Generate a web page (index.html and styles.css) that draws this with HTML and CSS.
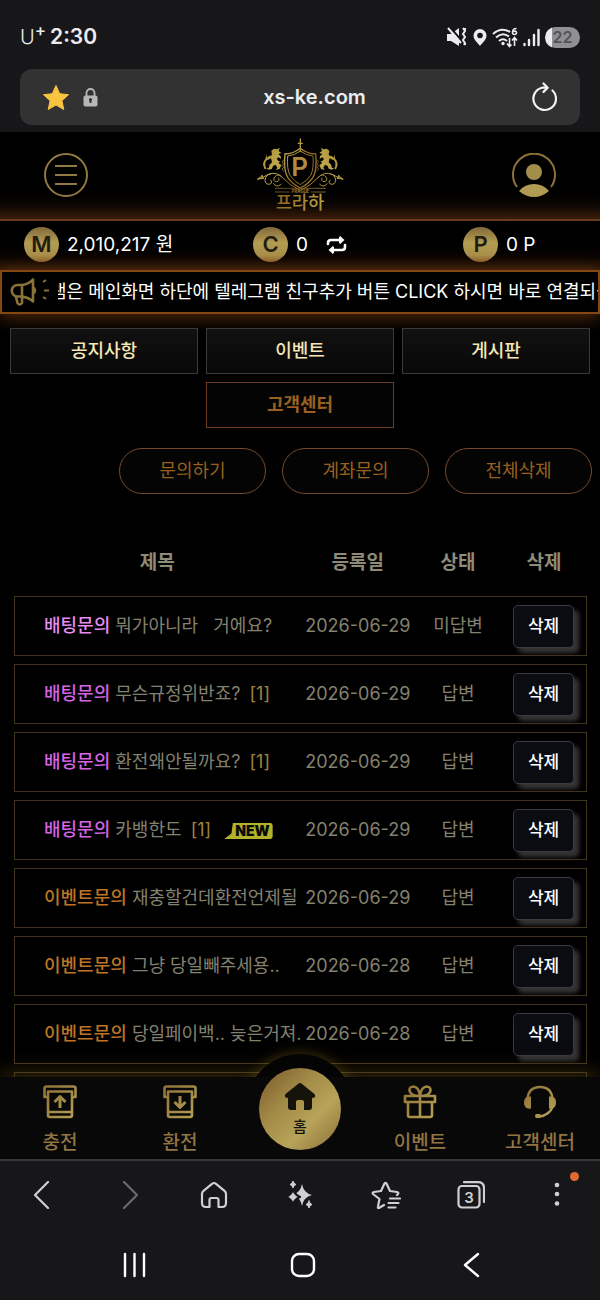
FILE: index.html
```html
<!DOCTYPE html>
<html lang="ko">
<head>
<meta charset="utf-8">
<meta name="viewport" content="width=device-width, initial-scale=1">
<title>프라하 고객센터</title>
<link rel="stylesheet" href="styles.css">
</head>
<body>
<svg class="defs" width="0" height="0" aria-hidden="true">
  <defs>
    <linearGradient id="gold" gradientUnits="userSpaceOnUse" x1="0" y1="0" x2="32" y2="32"><stop offset="0" stop-color="#8f6f36"/><stop offset=".5" stop-color="#a18846"/><stop offset="1" stop-color="#b5a056"/></linearGradient>
    <linearGradient id="crest" gradientUnits="userSpaceOnUse" x1="0" y1="10" x2="300" y2="230"><stop offset="0" stop-color="#8b7226"/><stop offset=".3" stop-color="#c0a94c"/><stop offset=".5" stop-color="#8f6522"/><stop offset=".75" stop-color="#b99e45"/><stop offset="1" stop-color="#836421"/></linearGradient>
  </defs>
</svg>
<div class="phone">
  <header class="chrome">
    <div class="status">
      <span class="carrier">U<sup>+</sup></span>
      <span class="clock">2:30</span>
      <div class="signals">
        <svg width="21" height="22" viewBox="0 0 21 22" fill="#ececf0"><path d="M0 8h4l8-6v18l-8-5H0z"/><path d="M2 0l12 14" stroke="#17171a" stroke-width="2"/><path d="M1 2l13 15M16 2l2 3-2 3 2 3-2 3 2 3-1 2" fill="none" stroke="#ececf0" stroke-width="2"/><path d="M17 3h2M17 18h2" stroke="#ececf0" stroke-width="2"/></svg>
        <svg width="14" height="19" viewBox="0 0 14 19"><path d="M7 1a6.500 6.500 0 0 1 6.500 6.500C13.500 12 8.500 15.500 7 18 5.500 15.500.5 12 .5 7.500A6.500 6.500 0 0 1 7 1z" fill="#ececf0"/><circle cx="7" cy="7.500" r="2.800" fill="#17171a"/></svg>
        <svg width="26" height="21" viewBox="0 0 26 21" fill="none" stroke="#ececf0" stroke-width="2"><path d="M1 7q8-7.500 17-2M4 10.500q6.500-6 13-1M7 14q4-3.500 8 0"/><circle cx="11" cy="16.500" r="1.700" fill="#ececf0" stroke="none"/><path stroke-width="1.600" d="M17.500 11v8m-2.500-2.500 2.500 3 2-2M22.500 19v-8m-2.500 2.500 2.500-3 2.500 3"/><path stroke-width="1.600" d="M24.500 1.500q-4 0-4 4a2 2 0 1 0 4 0q0-2-3.500-1"/></svg>
        <svg width="17" height="19" viewBox="0 0 17 19" stroke="#ececf0" stroke-width="2.400" stroke-linecap="round"><path d="M1.500 16v1M6 12v5M11 7v10M15.500 2v15"/></svg>
        <span class="battery">22</span>
      </div>
    </div>
    <div class="address">
      <svg width="28" height="27" viewBox="0 0 28 27"><path d="M14 1.500l3.700 8.200 8.800 1-6.600 6 1.900 8.800-7.800-4.500-7.800 4.500 1.900-8.800-6.600-6 8.800-1z" fill="#f9c440" stroke="#f9c440" stroke-linejoin="round"/></svg>
      <svg class="lock" width="15" height="19" viewBox="0 0 15 19"><path d="M3.500 9V5a4 4 0 0 1 8 0v4" fill="none" stroke="#b7b7b9" stroke-width="1.800"/><rect x=".5" y="7.500" width="14" height="11" rx="2" fill="#b7b7b9"/><path d="M7.500 11v4" stroke="#333" stroke-width="2"/><circle cx="7.500" cy="11.500" r="1.500" fill="#333"/></svg>
      <input class="url" type="text" value="xs-ke.com" aria-label="주소">
      <button class="plain" aria-label="새로고침"><svg width="26" height="30" viewBox="0 0 26 30" fill="none" stroke="#f4f4f6" stroke-width="2.200" stroke-linecap="round" stroke-linejoin="round"><path d="M21.500 8.500A11.300 11.300 0 1 1 11 5.700h5.500M12.500 1.500l4.200 4.200-4.200 4.200"/></svg></button>
    </div>
  </header>

  <main class="site">
    <div class="masthead">
      <button class="plain" aria-label="메뉴"><svg width="44" height="44" viewBox="0 0 44 44" fill="none" stroke="#927942" stroke-width="2"><circle cx="22" cy="22" r="21"/><path d="M11 13h22M11 22h22M11 31h22"/></svg></button>
      <a class="logo" href="#" aria-label="프라하">
        <svg width="100" height="80" viewBox="0 0 300 240">
          <g fill="none" stroke="url(#crest)" stroke-width="4" stroke-linecap="round">
            <path d="M151 12v38M145 25h12M151 40Q130 57 105 57q-5 48 8 70 14 20 38 32 24-12 38-32 13-22 8-70-25 0-46-17z"/>
            <path stroke-width="3" d="M151 48q-18 14-38 15-3 40 7 58 11 17 31 28 20-11 31-28 10-18 7-58-20-1-38-15z"/>
            <path stroke-width="3" d="M150 166Q118 151 96 126q-12-12-22 0-7 13 6 14 10-2 6-11M98 128q-18-21-45-9-10 7-30 14M62 116q-16 4-17 20 2 15 16 11 9-6 1-12M35 121l6 9-18 2 14-10M93 148q-14 12-22-2"/>
            <path stroke-width="3" d="M152 166q32-15 54-40 12-12 22 0 7 13-6 14-10-2-6-11M204 128q18-21 45-9 10 7 30 14M240 116q16 4 17 20-2 15-16 11-9-6-1-12M267 121l-6 9 18 2-14-10M209 148q14 12 22-2"/>
            <path stroke-width="2" d="M76 160h150M76 171h42M184 171h42M101 75q-9 5 0 11-9 5 0 11-9 5 0 11M201 75q9 5 0 11 9 5 0 11 9 5 0 11"/>
          </g>
          <g fill="url(#crest)">
            <path d="M64 47l8-6 9 2 8-5-3 10 8 6-9 3 7 7 1 8-7-5-6 4 5 7 6 2-6 4 9 6-5 12-11 3 4-7-5-9-8 4-3 8-9 3-8-5 8-1 1-8 8-8-3-12-10 5-4-5 8-7 9-2z"/>
            <path d="M49 101q-9-17 4-28-4-8-3-16l-4 15q-12 12-2 31z"/>
            <g transform="matrix(-1 0 0 1 302 0)"><path d="M64 47l8-6 9 2 8-5-3 10 8 6-9 3 7 7 1 8-7-5-6 4 5 7 6 2-6 4 9 6-5 12-11 3 4-7-5-9-8 4-3 8-9 3-8-5 8-1 1-8 8-8-3-12-10 5-4-5 8-7 9-2z"/><path d="M49 101q-9-17 4-28-4-8-3-16l-4 15q-12 12-2 31z"/></g>
          </g>
          <text class="crest-p" x="149" y="122">P</text>
          <text class="crest-sub" x="151" y="173">PRAGUE</text>
          <text class="crest-name" x="150" y="222">프라하</text>
        </svg>
      </a>
      <button class="plain" aria-label="내 정보"><svg width="44" height="44" viewBox="0 0 44 44"><path d="M5 34A21 21 0 1 1 39 34" fill="none" stroke="#8c7038" stroke-width="2"/><circle cx="22" cy="19" r="8" fill="#a38d4b"/><path d="M7 38q6-7 15-7t15 7q-7 6-15 6t-15-6z" fill="#b19b53"/></svg></button>
    </div>

    <div class="balances">
      <div class="balance"><span class="coin">M</span>2,010,217 원</div>
      <div class="balance"><span class="coin">C</span>0
        <button class="plain swap" aria-label="전환"><svg width="21" height="20" viewBox="0 0 21 20" fill="none" stroke="#fff" stroke-width="2.600" stroke-linecap="round"><path d="M2 9V8q0-3 3-3h9M19 10v2q0 3-3 3H7"/><path d="M14 1l4.500 4-4.500 4zM7 11l-4.500 4L7 19z" fill="#fff" stroke="none"/><path d="M14 2.500v5M7 12.500v5" stroke-width="2"/></svg></button>
      </div>
      <div class="balance"><span class="coin">P</span>0 P</div>
    </div>

    <div class="notice">
      <svg width="40" height="30" viewBox="0 0 40 30" fill="none" stroke="#8a7338" stroke-width="2.600" stroke-linejoin="round"><path d="M12 8H7.500a5.500 5.500 0 0 0 0 11.500H12zM12 8q7-1 11-5.500v22q-4-4-11-5M23 10q4 3.500 0 7M6 20l1.500 6q2 3 4.500 0v-6"/><path stroke-width="2" d="M33 5l3-2M34 13.500h5M33 20l3 2"/></svg>
      <p class="ticker">램은 메인화면 하단에 텔레그램 친구추가 버튼 CLICK 하시면 바로 연결되십니다</p>
    </div>

    <nav class="tabs">
      <a href="#">공지사항</a>
      <a href="#">이벤트</a>
      <a href="#">게시판</a>
      <a href="#" class="current">고객센터</a>
    </nav>

    <div class="actions">
      <button>문의하기</button>
      <button>계좌문의</button>
      <button>전체삭제</button>
    </div>

    <div class="board">
      <table>
        <thead><tr><th class="c-title">제목</th><th class="c-date">등록일</th><th class="c-state">상태</th><th class="c-del">삭제</th></tr></thead>
        <tbody>
          <tr><td><a href="#"><b class="bet hot">배팅문의</b> 뭐가아니라 &nbsp; 거에요?</a></td><td>2026-06-29</td><td>미답변</td><td><button class="del">삭제</button></td></tr>
          <tr><td><a href="#"><b class="bet">배팅문의</b> 무슨규정위반죠? <i>[1]</i></a></td><td>2026-06-29</td><td>답변</td><td><button class="del">삭제</button></td></tr>
          <tr><td><a href="#"><b class="bet">배팅문의</b> 환전왜안될까요? <i>[1]</i></a></td><td>2026-06-29</td><td>답변</td><td><button class="del">삭제</button></td></tr>
          <tr><td><a href="#"><b class="bet">배팅문의</b> 카뱅한도 <i>[1]</i> <span class="new">NEW</span></a></td><td>2026-06-29</td><td>답변</td><td><button class="del">삭제</button></td></tr>
          <tr><td><a href="#"><b class="event">이벤트문의</b> 재충할건데환전언제될</a></td><td>2026-06-29</td><td>답변</td><td><button class="del">삭제</button></td></tr>
          <tr><td><a href="#"><b class="event">이벤트문의</b> 그냥 당일빼주세용..</a></td><td>2026-06-28</td><td>답변</td><td><button class="del">삭제</button></td></tr>
          <tr><td><a href="#"><b class="event">이벤트문의</b> 당일페이백.. 늦은거져.</a></td><td>2026-06-28</td><td>답변</td><td><button class="del">삭제</button></td></tr>
          <tr><td></td><td></td><td></td><td></td></tr>
        </tbody>
      </table>
    </div>
  </main>

  <nav class="dock">
    <a href="#"><svg width="34" height="34" viewBox="0 0 34 34" fill="none" stroke="url(#gold)" stroke-width="2.600" stroke-linejoin="round"><path d="M5 12H1.500V3.500q0-2 2-2h27q2 0 2 2V12H29M5 12V6.500h24V30q0 2-2 2H7q-2 0-2-2zM5 27h24"/><path d="M17 23V12M11.500 17l5.500-5.500 5.500 5.500" stroke-width="3"/></svg>충전</a>
    <a href="#"><svg width="34" height="34" viewBox="0 0 34 34" fill="none" stroke="url(#gold)" stroke-width="2.600" stroke-linejoin="round"><path d="M5 12H1.500V3.500q0-2 2-2h27q2 0 2 2V12H29M5 12V6.500h24V30q0 2-2 2H7q-2 0-2-2zM5 27h24"/><path d="M17 11v11M11.500 17l5.500 5.500 5.500-5.500" stroke-width="3"/></svg>환전</a>
    <a href="#" class="home"><svg width="32" height="28" viewBox="0 0 32 28" fill="#16130b"><path d="M16 0q1 0 2 1l12.500 10q1.500 2 0 3.500L28 15v9q0 3-3 3h-5v-8q0-2-2-2h-4q-2 0-2 2v8H7q-3 0-3-3v-9l-2.500-.5Q0 13 1.500 11L14 1q1-1 2-1z"/></svg>홈</a>
    <a href="#"><svg width="34" height="34" viewBox="0 0 34 34" fill="none" stroke="url(#gold)" stroke-width="2.600" stroke-linejoin="round"><path d="M2 11h30v6H2zM5 17v13q0 2 2 2h20q2 0 2-2V17M17 11v21M17 11q-1-9-6.500-9.500Q5 2 7 7q2 4 10 4zM17 11q1-9 6.500-9.500Q29 2 27 7q-2 4-10 4z"/></svg>이벤트</a>
    <a href="#"><svg width="34" height="34" viewBox="0 0 34 34" fill="none" stroke="url(#gold)" stroke-width="2.400"><path d="M4.500 15Q5 2 17 2t12.500 13v7q-3 8-13 9.500"/><path d="M8 11.500v12q-7 1-7-6t7-6zM26 11.500v12q7 1 7-6t-7-6zM13 29h4q2 2 0 4h-4q-2-2 0-4z" fill="url(#gold)" stroke="none"/></svg>고객센터</a>
  </nav>

  <footer class="chrome foot">
    <div class="tools">
      <button class="plain" aria-label="뒤로"><svg width="28" height="28" viewBox="0 0 28 28"><path d="M19 1L6 14l13 13"/></svg></button>
      <button class="plain dim" aria-label="앞으로"><svg width="28" height="28" viewBox="0 0 28 28"><path d="M9 1l13 13L9 27"/></svg></button>
      <button class="plain" aria-label="홈페이지"><svg width="28" height="28" viewBox="0 0 28 28"><path d="M14 2q1 0 2 .8l8.500 7q1.500 1.200 1.500 3V22q0 4-4 4h-3.500v-7q0-2-2-2h-5q-2 0-2 2v7H6q-4 0-4-4v-9.200q0-1.800 1.500-3l8.500-7Q13 2 14 2z"/></svg></button>
      <button class="plain" aria-label="AI"><svg width="30" height="28" viewBox="0 0 30 28"><g class="solid"><path d="M17 3q1.500 9 10 11-8.500 2-10 11-1.500-9-10-11 8.500-2 10-11z"/><path d="M8 7q1 6.500 7 9-6 2-7 9-1-7-7-9 6-2.500 7-9z" stroke="#17171a"/><path d="M8 0q.5 3 3 3.500Q8.500 4 8 7 7.500 4 5 3.500 7.500 3 8 0zM24 20q.5 3 3 3.500-2.500.5-3 3.500-.5-3-3-3.500 2.500-.5 3-3.500z" stroke="#d0d0d4" stroke-width="1"/></g></svg></button>
      <button class="plain" aria-label="북마크"><svg width="30" height="28" viewBox="0 0 30 28"><path d="M13 24l-5 3q-1.500.5-1-1.500l1.500-7.500L2 13q-1-1.500 1-2l7-1 3.500-7.500q1-1.500 2 0L19 10l7 1q2 .5 1 2l-1 1M19 17.500h10M17.500 22h10M17.500 26.500h7"/></svg></button>
      <button class="plain" aria-label="탭 3개"><svg width="28" height="28" viewBox="0 0 28 28"><rect x="1.500" y="5" width="21" height="21.500" rx="3.500"/><path d="M7 1.200h14q6 0 6 6V21"/><text x="12" y="21.500">3</text></svg></button>
      <button class="plain more" aria-label="더보기"><svg width="8" height="28" viewBox="0 0 8 28"><g class="solid"><circle cx="4" cy="4" r="2.300"/><circle cx="4" cy="13" r="2.300"/><circle cx="4" cy="22.500" r="2.300"/></g></svg></button>
    </div>
    <div class="system">
      <button class="plain" aria-label="최근 앱"><svg width="26" height="26" viewBox="0 0 26 26"><path d="M3 2v22M12.500 2v22M22 2v22"/></svg></button>
      <button class="plain" aria-label="홈 화면"><svg width="26" height="26" viewBox="0 0 26 26"><rect x="2" y="2" width="22" height="22" rx="7"/></svg></button>
      <button class="plain" aria-label="이전"><svg width="26" height="26" viewBox="0 0 26 26"><path d="M20 2L7 13l13 11"/></svg></button>
    </div>
  </footer>
</div>
</body>
</html>
```
FILE: styles.css
```css
* { box-sizing: border-box; }

body {
  margin: 0;
  background: #000;
  color: #fff;
  font: 18px/24px "Inter", "Noto Sans CJK KR", sans-serif;
}

a { color: inherit; text-decoration: none; }
button { font: inherit; color: inherit; cursor: pointer; }
svg { display: block; flex: none; }
.defs { position: absolute; }

.plain { display: flex; padding: 0; border: 0; background: none; }

.phone {
  display: flex;
  flex-direction: column;
  height: 100vh;
  overflow: hidden;
}

/* Browser chrome */
.chrome { flex: none; background: #17171a; color: #ececf0; }

.status {
  display: flex;
  align-items: center;
  gap: 4px;
  padding: 24px 20px 19px;
  line-height: 26px;
}
.carrier { font-size: 20px; font-weight: 300; }
.carrier sup { font-size: 17px; font-weight: 500; line-height: 0; }
.clock { font-size: 21px; font-weight: 600; }
.signals { display: flex; align-items: center; gap: 5px; margin-left: auto; }
.battery {
  width: 35px;
  border-radius: 11px;
  background: linear-gradient(90deg, #ececf0 7px, #909093 7px);
  color: #535356;
  font-size: 16px;
  font-weight: 600;
  line-height: 21px;
  text-align: center;
}

.address {
  display: flex;
  align-items: center;
  margin: 0 20px;
  padding: 0 23px 0 22px;
  height: 56px;
  border-radius: 12px;
  background: #323232;
}
.lock { margin-left: 13px; }
.url {
  flex: 1;
  min-width: 0;
  margin: 0 8px 0 8px;
  padding: 0;
  border: 0;
  background: none;
  color: #ececee;
  font: 600 20px/28px "Inter", sans-serif;
  text-align: center;
}
.chrome:first-child { padding-bottom: 7px; }

/* Site header */
.site { flex: 1; min-height: 0; overflow: hidden; }

.masthead {
  display: flex;
  align-items: center;
  justify-content: space-between;
  padding: 3px 44px 4px;
  border-bottom: 2px solid #6a3c1b;
  background: linear-gradient(#000 72%, #100803 86%, #3a1d0a);
}
.crest-p, .crest-sub, .crest-name { text-anchor: middle; fill: url(#crest); }
.crest-p { font: 600 78px "Inter", sans-serif; fill: #b18a42; }
.crest-sub { font: 700 13px "Inter", sans-serif; }
.crest-name { font: 500 53px "Noto Sans CJK KR", sans-serif; }

.balances {
  display: grid;
  grid-template-columns: 229fr 210fr 137fr;
  padding: 6px 0 8px 24px;
  background: linear-gradient(#000 50%, #0b0502 75%, #301808);
}
.balance {
  display: flex;
  align-items: center;
  gap: 8px;
  font-size: 19px;
  white-space: nowrap;
}
.coin {
  width: 35px;
  border-radius: 50%;
  background: linear-gradient(#83683a, #b29d52 45%, #a98f4a 80%, #8b5e2c);
  color: #221d10;
  font-size: 22px;
  font-weight: 600;
  line-height: 35px;
  text-align: center;
}
.swap { margin-left: 10px; }

.notice {
  display: flex;
  align-items: center;
  gap: 8px;
  padding-left: 8px;
  border: 2px solid #834713;
  background: #000;
  box-shadow: 0 3px 18px rgba(150, 75, 20, .6);
}
.ticker {
  flex: 1;
  min-width: 0;
  margin: 0;
  overflow: hidden;
  line-height: 40px;
  text-indent: -8px;
  white-space: nowrap;
}

/* Section links */
.tabs {
  display: grid;
  grid-template-columns: repeat(3, 1fr);
  gap: 8px;
  padding: 14px 10px 20px;
}
.tabs a {
  border: 1px solid #3a3a3a;
  background: linear-gradient(#111, #080808);
  color: #f5e6b3;
  font-weight: 500;
  line-height: 44px;
  text-align: center;
}
.tabs .current {
  grid-column: 2;
  border-color: #6d3d1f;
  background: #040404;
  color: #99601f;
  font-weight: 700;
}

.actions {
  display: flex;
  justify-content: flex-end;
  gap: 16px;
  padding: 0 8px 22px;
}
.actions button {
  width: 147px;
  border: 1px solid #764a30;
  border-radius: 23px;
  background: #040404;
  padding: 0;
  color: #99601f;
  line-height: 44px;
}

/* Inquiry list */
.board { padding: 14px 13px 0 14px; }
table {
  width: 100%;
  table-layout: fixed;
  border-collapse: separate;
  border-spacing: 0 8px;
}
th {
  height: 50px;
  padding: 0;
  color: #8e8b79;
  font-size: 19px;
  font-weight: 700;
}
.c-date { width: 20%; }
.c-state { width: 15%; }
.c-del { width: 15%; }
td {
  height: 60px;
  padding: 0;
  border: solid #40351e;
  border-width: 1px 0;
  color: #838170;
  text-align: center;
  white-space: nowrap;
}
td:first-child {
  padding-left: 29px;
  border-left-width: 1px;
  overflow: hidden;
  text-align: left;
}
td:last-child { border-right-width: 1px; }
td b { font-weight: 500; }
td i { margin-left: 4px; color: #a1823e; font-style: normal; }
.bet { color: #d565e3; }
.hot { color: #e78df0; }
.event { color: #bd7424; }
.new {
  display: inline-block;
  margin-left: 8px;
  padding: 0 3px 0 11px;
  background: #b2b32b;
  clip-path: polygon(18% 0, 97% 0, 100% 12%, 100% 88%, 97% 100%, 0 100%, 15% 65%);
  color: #0a0a05;
  font-size: 14px;
  font-weight: 900;
  line-height: 16px;
}
.del {
  width: 61px;
  padding: 0;
  border: 1px solid #3a3b3e;
  border-radius: 5px;
  background: #0a0c12;
  box-shadow: 5px 5px 4px #343434;
  color: #fff;
  font-size: 17px;
  font-weight: 500;
  line-height: 41px;
}

/* Site dock */
.dock {
  position: relative;
  isolation: isolate;
  flex: none;
  display: grid;
  grid-template-columns: repeat(5, 1fr);
  padding: 8px 0 2px;
  box-shadow: 0 0 24px rgba(140, 105, 30, .5);
  color: #927542;
  font-size: 19px;
  font-weight: 500;
  line-height: 28px;
}
.dock::before {
  content: "";
  position: absolute;
  z-index: -1;
  left: calc(50% - 54px);
  top: -23px;
  width: 108px;
  height: 108px;
  border-radius: 50%;
  background: #040404;
  box-shadow: 0 0 14px rgba(140, 105, 30, .5);
}
.dock::after {
  content: "";
  position: absolute;
  z-index: -1;
  inset: 0;
  background: #080808;
}
.dock a {
  display: flex;
  flex-direction: column;
  align-items: center;
  gap: 10px;
}
.dock .home {
  position: absolute;
  left: calc(50% - 41px);
  top: -9px;
  width: 82px;
  height: 82px;
  padding-top: 15px;
  gap: 6px;
  border-radius: 50%;
  background: linear-gradient(135deg, #80602f 5%, #a58e49 40%, #b7a359 65%, #8a6b37);
  color: #16130b;
  font-size: 15px;
  line-height: 20px;
}
.dock .home + a { grid-column: 4; }

/* Browser toolbar and system keys */
.foot { position: relative; border-top: 2px solid #37373a; }
.foot svg {
  fill: none;
  stroke: #d0d0d4;
  stroke-width: 2.200;
  stroke-linecap: round;
  stroke-linejoin: round;
}
.foot .solid { fill: #d0d0d4; stroke: none; }
.foot text {
  fill: #d0d0d4;
  stroke: none;
  font: 600 15px "Inter", sans-serif;
  text-anchor: middle;
}
.tools, .system { display: grid; align-items: center; justify-items: center; }
.tools { grid-template-columns: repeat(7, 1fr); padding: 20px 0; }
.dim { opacity: .45; }
.more { position: relative; }
.more::after {
  content: "";
  position: absolute;
  right: -18px;
  top: -9px;
  width: 9px;
  height: 9px;
  border-radius: 50%;
  background: #df6b33;
}
.system { grid-template-columns: repeat(3, 1fr); padding: 23px 45px 22px 51px; }
.system svg { stroke: #fff; stroke-width: 2.400; }
```
